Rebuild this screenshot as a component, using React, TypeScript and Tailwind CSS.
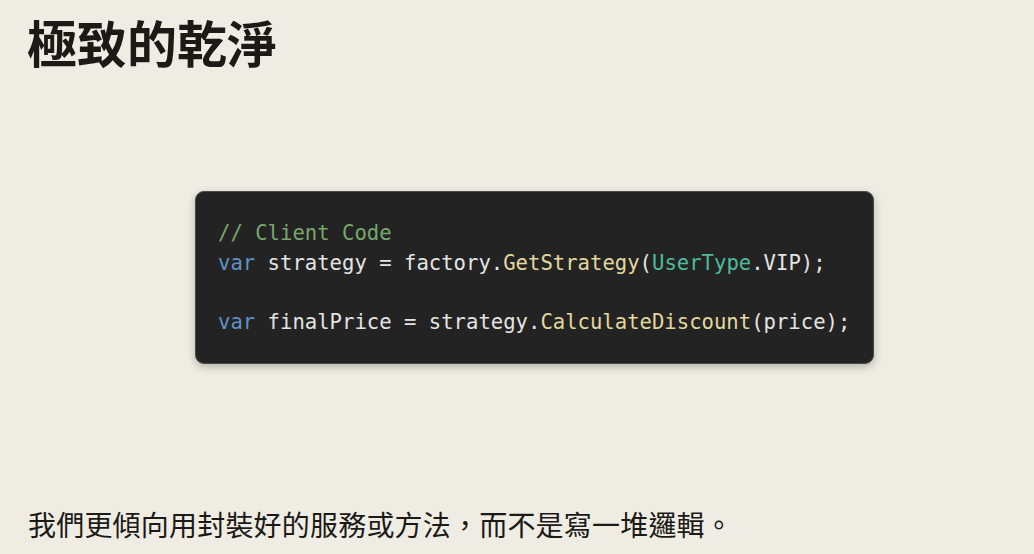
import React from "react";

const cjk = { fontFamily: '"Noto Sans CJK TC", "Noto Sans", sans-serif' };
const mono = { fontFamily: '"DejaVu Sans Mono", "Liberation Mono", monospace' };

const Kw = ({ children }: { children: React.ReactNode }) => (
  <span className="text-[#5e92c4]">{children}</span>
);
const Fn = ({ children }: { children: React.ReactNode }) => (
  <span className="text-[#e3d89d]">{children}</span>
);
const Ty = ({ children }: { children: React.ReactNode }) => (
  <span className="text-[#4fbb9c]">{children}</span>
);

export default function App() {
  return (
    <div className="flex h-[554px] w-[1034px] flex-col overflow-hidden bg-[#efede3] text-[#1c1a17]">
      {/* title */}
      <h1
        className="ml-[27px] mt-[12px] text-[50px] font-bold leading-[58px]"
        style={cjk}
      >
        極致的乾淨
      </h1>

      {/* code block */}
      <div
        className="ml-[195px] mt-[121px] h-[173px] w-[679px] rounded-[9px] border border-[#4a4a48] bg-[#232323] pl-[22px] pt-[27px] text-[20.6px] leading-[29.5px] text-[#e4e4e2] shadow-[0_3px_8px_rgba(0,0,0,0.25)]"
        style={mono}
      >
        <div className="whitespace-pre text-[#77a86a]">// Client Code</div>
        <div className="whitespace-pre">
          <Kw>var</Kw> strategy = factory.<Fn>GetStrategy</Fn>(<Ty>UserType</Ty>.VIP);
        </div>
        <div className="h-[29.5px]" />
        <div className="whitespace-pre">
          <Kw>var</Kw> finalPrice = strategy.<Fn>CalculateDiscount</Fn>(price);
        </div>
      </div>

      {/* caption */}
      <p className="ml-[28px] mt-[142px] text-[28px] leading-[36px] tracking-[0.2px]" style={cjk}>
        我們更傾向用封裝好的服務或方法，而不是寫一堆邏輯。
      </p>
    </div>
  );
}
